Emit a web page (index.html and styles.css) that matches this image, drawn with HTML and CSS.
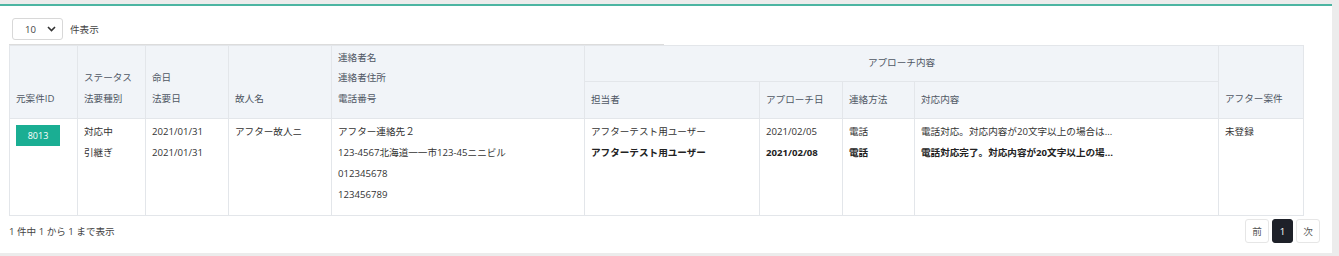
FILE: index.html
```html
<!DOCTYPE html>
<html lang="ja">
<head>
<meta charset="utf-8">
<link rel="stylesheet" href="styles.css">
</head>
<body>
<div class="card">
  <div class="toolbar">
    <div class="select">
      <span class="sel-val">10</span>
      <svg class="chev" width="9" height="6" viewBox="0 0 9 6"><path d="M1 1l3.5 3.5L8 1" fill="none" stroke="#333" stroke-width="1.6"/></svg>
    </div>
    <span class="sel-label">件表示</span>
  </div>
  <div class="topline"></div>
  <table class="grid">
    <colgroup>
      <col style="width:68px"><col style="width:68px"><col style="width:83px"><col style="width:103px"><col style="width:253px">
      <col style="width:175px"><col style="width:83px"><col style="width:72px"><col style="width:304px"><col style="width:85px">
    </colgroup>
    <thead>
      <tr class="h1">
        <th rowspan="2">元案件ID</th>
        <th rowspan="2"><div>ステータス</div><div>法要種別</div></th>
        <th rowspan="2"><div>命日</div><div>法要日</div></th>
        <th rowspan="2">故人名</th>
        <th rowspan="2"><div>連絡者名</div><div>連絡者住所</div><div>電話番号</div></th>
        <th colspan="4" class="group">アプローチ内容</th>
        <th rowspan="2">アフター案件</th>
      </tr>
      <tr class="h2">
        <th>担当者</th>
        <th>アプローチ日</th>
        <th>連絡方法</th>
        <th>対応内容</th>
      </tr>
    </thead>
    <tbody>
      <tr>
        <td><span class="badge">8013</span></td>
        <td><div>対応中</div><div>引継ぎ</div></td>
        <td><div>2021/01/31</div><div>2021/01/31</div></td>
        <td><div>アフター故人ニ</div></td>
        <td><div>アフター連絡先２</div><div>123-4567北海道一一市123-45ニニビル</div><div>012345678</div><div>123456789</div></td>
        <td><div>アフターテスト用ユーザー</div><div class="b">アフターテスト用ユーザー</div></td>
        <td><div>2021/02/05</div><div class="b">2021/02/08</div></td>
        <td><div>電話</div><div class="b">電話</div></td>
        <td><div>電話対応。対応内容が20文字以上の場合は...</div><div class="b">電話対応完了。対応内容が20文字以上の場...</div></td>
        <td><div>未登録</div></td>
      </tr>
    </tbody>
  </table>
  <div class="footer">
    <span class="info">1 件中 1 から 1 まで表示</span>
    <div class="pager">
      <span class="pg">前</span>
      <span class="pg active">1</span>
      <span class="pg">次</span>
    </div>
  </div>
</div>
</body>
</html>
```
FILE: styles.css
```css
html, body {
  margin: 0;
  padding: 0;
}
body {
  background: #ececec;
  font-family: "Open Sans", "Noto Sans CJK JP", sans-serif;
  font-size: 9.6px;
  color: #333;
  width: 1339px;
  height: 256px;
  overflow: hidden;
}
.card {
  margin-top: 4px;
  width: 1332px;
  height: 249px;
  box-sizing: border-box;
  background: #fff;
  border-top: 2px solid #4cb5a2;
  padding: 12px 12px 0 9px;
}
.toolbar {
  display: flex;
  align-items: center;
  gap: 7px;
  padding-left: 3px;
}
.select {
  width: 51px;
  height: 22px;
  box-sizing: border-box;
  border: 1px solid #d8d8d8;
  border-radius: 3px;
  display: flex;
  align-items: center;
  justify-content: space-between;
  padding: 0 6px 0 12px;
}
.sel-val { font-size: 9.6px; color: #444; }
.sel-label { color: #444; }
.topline {
  margin-top: 4px;
  width: 655px;
  height: 1px;
  background: #dcdcdc;
}
.grid {
  width: 1294px;
  table-layout: fixed;
  border-collapse: collapse;
  border: 1px solid #e3e6ea;
}
.grid th, .grid td {
  border: 1px solid #e3e6ea;
  text-align: left;
  font-weight: normal;
  line-height: 20.5px;
  padding: 0 6px;
  white-space: nowrap;
  overflow: hidden;
}
.grid thead th {
  background: #f1f4f8;
  color: #4f5764;
  vertical-align: bottom;
  padding-bottom: 9px;
}
.grid tr.h1 { height: 36px; }
.grid tr.h2 { height: 37px; }
.grid th.group {
  text-align: center;
  vertical-align: middle;
  padding: 0 6px;
}
.grid tr.h2 th {
  vertical-align: middle;
  padding: 0 6px;
}
.grid tbody tr { height: 97px; }
.grid tbody td {
  vertical-align: top;
  padding-top: 2px;
  line-height: 21px;
}
.grid td .b {
  font-weight: bold;
  color: #222;
}
.badge {
  display: inline-block;
  margin-top: 4px;
  width: 44px;
  height: 21px;
  line-height: 21px;
  text-align: center;
  background: #1aae93;
  color: #fff;
  font-size: 9px;
}
.grid tbody td:first-child { line-height: normal; }
.footer {
  margin-top: 3px;
  display: flex;
  justify-content: space-between;
  align-items: center;
  width: 1311px;
}
.info { color: #444; }
.pager {
  display: flex;
  gap: 3px;
}
.pg {
  height: 24px;
  min-width: 24px;
  box-sizing: border-box;
  border: 1px solid #e6e6e6;
  border-radius: 3px;
  display: flex;
  align-items: center;
  justify-content: center;
  color: #555;
}
.pg.active {
  min-width: 21px;
  background: #1e2129;
  border-color: #1e2129;
  color: #fff;
}
```
